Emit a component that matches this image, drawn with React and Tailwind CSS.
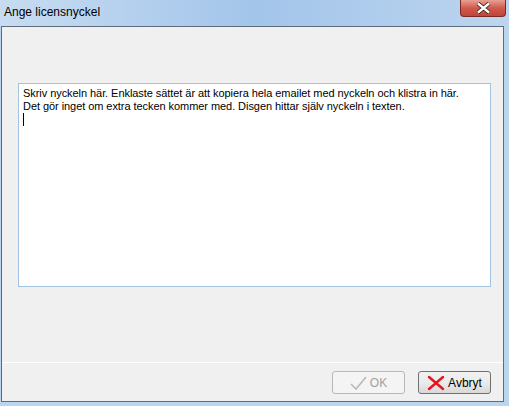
import React from "react";

const font = { fontFamily: '"Liberation Sans", Arial, sans-serif' };

const CheckIcon = () => (
  <svg width="18" height="16" viewBox="0 0 18 16">
    <path d="M1 9 L6 14 L16 2" fill="none" stroke="#b9b9b9" strokeWidth="1.6" />
  </svg>
);

const CrossIcon = () => (
  <svg width="18" height="16" viewBox="0 0 18 16">
    <path d="M2 2 L16 14 M16 2 L2 14" fill="none" stroke="#e8141b" strokeWidth="2.4" strokeLinecap="round" />
  </svg>
);

const App = () => {
  return (
    <div className="w-[509px] h-[406px] bg-[#bcd5ef] flex flex-col overflow-hidden" style={font}>
      {/* title bar */}
      <div className="h-[26px] shrink-0 flex items-start justify-between bg-gradient-to-r from-[#c8dcf1] via-[#a3c5ea] to-[#bcd5ef]">
        <span className="pl-[4px] pt-[5px] text-[12px] leading-[15px] text-black">Ange licensnyckel</span>
        <div className="mr-[3px] w-[46px] h-[17px] rounded-b-[4px] border border-t-0 border-[#7a2a25] bg-gradient-to-b from-[#e6a093] via-[#cf5a4c] to-[#c0453a] flex items-center justify-center">
          <svg width="15" height="12" viewBox="0 0 15 12">
            <path d="M2 1.5 L13 10.5 M13 1.5 L2 10.5" stroke="#3b1410" strokeWidth="4" />
            <path d="M2 1.5 L13 10.5 M13 1.5 L2 10.5" stroke="#ffffff" strokeWidth="2.4" />
          </svg>
        </div>
      </div>
      {/* client area */}
      <div className="ml-[1px] mr-[5px] mb-[4px] flex-1 flex flex-col border border-[#5d6c7c] bg-[#f0f0f0]">
        <div className="flex-1 pl-[16px] pt-[56px]">
          <div className="w-[473px] h-[204px] bg-white border border-[#a3c3e2] px-[4px] pt-[3px] text-[11px] leading-[13px] tracking-[-0.06px] text-black">
            <div>Skriv nyckeln här. Enklaste sättet är att kopiera hela emailet med nyckeln och klistra in här.</div>
            <div>Det gör inget om extra tecken kommer med. Disgen hittar själv nyckeln i texten.</div>
            <div className="w-[1px] h-[13px] bg-black" />
          </div>
        </div>
        <div className="h-[39px] border-t border-white flex justify-end items-start gap-[13px] pt-[8px] pr-[12px]">
          <button className="w-[73px] h-[23px] rounded-[3px] border border-[#b5b9bc] bg-[#f4f4f4] flex items-center justify-center gap-[2px] text-[12px] text-[#a0a0a0]">
            <CheckIcon />
            <span>OK</span>
          </button>
          <button className="w-[73px] h-[23px] rounded-[3px] border border-[#707070] bg-gradient-to-b from-[#f2f2f2] via-[#ebebeb] to-[#d8d8d8] flex items-center justify-center gap-[3px] text-[12px] text-black">
            <CrossIcon />
            <span>Avbryt</span>
          </button>
        </div>
      </div>
    </div>
  );
};

export default App;
